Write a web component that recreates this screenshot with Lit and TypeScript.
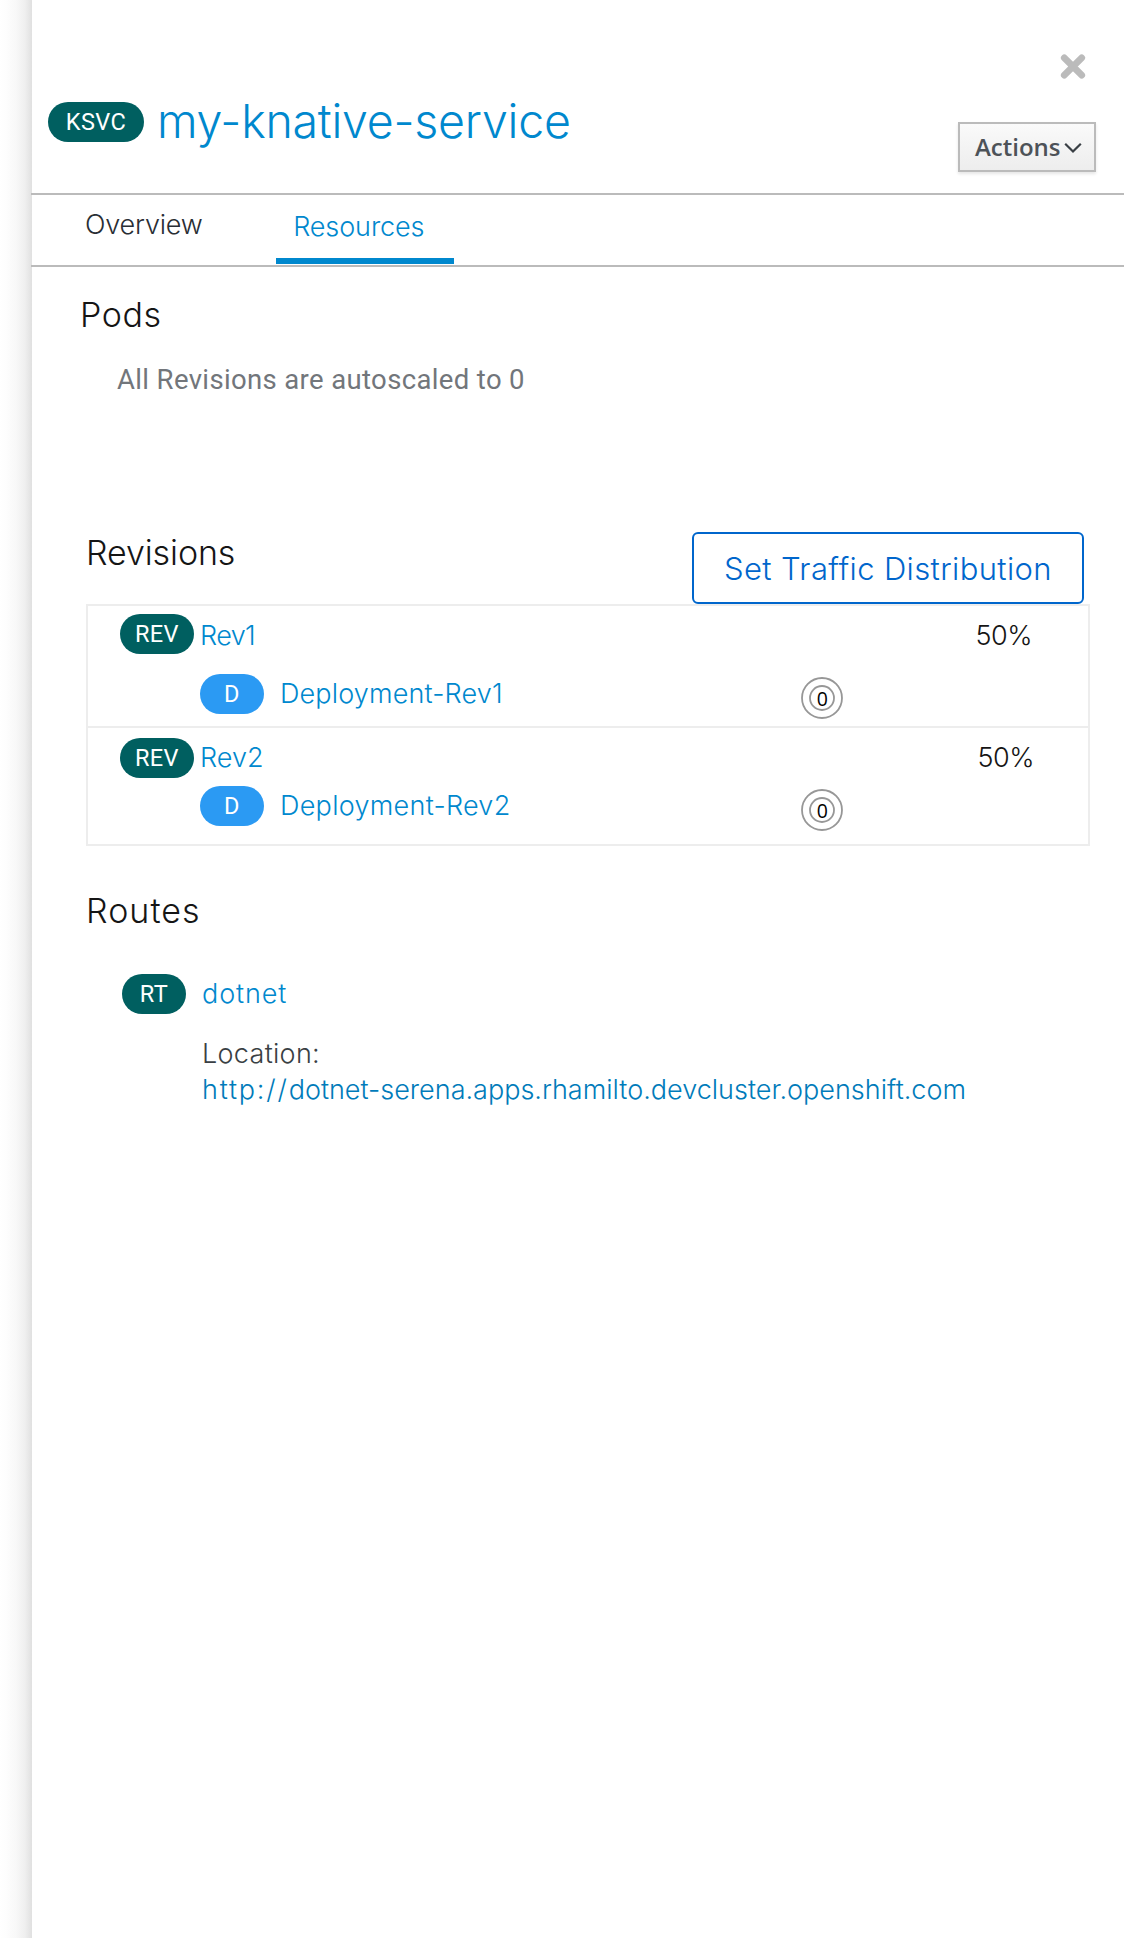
import { LitElement, html, css, svg } from "lit";
import { customElement, property } from "lit/decorators.js";

interface Revision {
  name: string;
  deployment: string;
  pods: number;
  traffic: string;
}

const REVISIONS: Revision[] = [
  { name: "Rev1", deployment: "Deployment-Rev1", pods: 0, traffic: "50%" },
  { name: "Rev2", deployment: "Deployment-Rev2", pods: 0, traffic: "50%" },
];

/** Rounded badge with the short name of a resource kind. */
@customElement("kind-badge")
class KindBadge extends LitElement {
  @property() label = "";

  static styles = css`
    :host {
      display: block;
      flex: none;
      box-sizing: border-box;
      height: 40px;
      border-radius: 20px;
      background: #005f60;
      color: #fff;
      font: 400 23.5px/40px Roboto, "Liberation Sans", sans-serif;
      letter-spacing: 0.4px;
      text-align: center;
      white-space: nowrap;
    }
  `;

  render() {
    return html`${this.label}`;
  }
}

/** Double ring with the number of pods in its centre. */
@customElement("pod-ring")
class PodRing extends LitElement {
  @property({ type: Number }) count = 0;

  static styles = css`
    :host {
      display: block;
      width: 42px;
      height: 42px;
    }
    .ring {
      display: block;
      fill: none;
      stroke: #979797;
      stroke-width: 1.8;
    }
    .count {
      fill: #000;
      stroke: none;
      font: 400 19.5px "Open Sans", "Noto Sans", sans-serif;
      text-anchor: middle;
    }
  `;

  render() {
    return html`<svg class="ring" width="42" height="42" viewBox="0 0 42 42">
      <circle cx="21" cy="21" r="20"></circle>
      <circle cx="21" cy="21" r="12"></circle>
      ${svg`<text class="count" x="21.3" y="28.6">${this.count}</text>`}
    </svg>`;
  }
}

@customElement("app-root")
class AppRoot extends LitElement {
  static styles = css`
    :host {
      display: flex;
      height: 1938px;
      background: #fff;
      color: #151515;
      font: 300 27px/36px Inter, "Liberation Sans", sans-serif;
      white-space: nowrap;
    }
    * {
      box-sizing: border-box;
    }
    a {
      color: #0088ce;
      text-decoration: none;
    }
    h1,
    h2,
    p {
      margin: 0;
      font-weight: 300;
    }
    button {
      font: inherit;
      margin: 0;
      padding: 0;
    }
    .gutter {
      flex: none;
      width: 32px;
      background: linear-gradient(to right, #fff 0, #fdfdfd 20%, #f8f8f8 50%, #efefef 78%, #e0e0e0 100%);
    }
    .panel {
      flex: 1;
      min-width: 0;
      display: flex;
      flex-direction: column;
    }
    .header {
      display: flex;
      justify-content: space-between;
      height: 195px;
      margin-left: -1px;
      padding: 0 28px 0 17px;
      border-bottom: 2px solid #bbb;
    }
    .title {
      display: flex;
      padding-top: 93px;
    }
    .title h1 {
      margin-left: 13px;
      font-size: 46.5px;
      line-height: 56px;
      letter-spacing: -0.25px;
    }
    .ksvc {
      width: 96px;
      margin-top: 9px;
    }
    .tools {
      display: flex;
      flex-direction: column;
      align-items: flex-end;
      padding-top: 54px;
    }
    .close {
      height: 26px;
      margin-right: 10px;
      border: 0;
      background: none;
    }
    .close svg,
    .actions svg {
      display: block;
      fill: none;
    }
    .actions {
      display: flex;
      align-items: center;
      width: 138px;
      height: 50px;
      margin-top: 42px;
      padding-left: 15px;
      border: 2px solid #bbb;
      background: linear-gradient(#fafafa, #ededed);
      box-shadow: 0 2px 3px rgba(3, 3, 3, 0.1);
      color: #4d5258;
      font: 600 24px/46px "Open Sans", sans-serif;
      letter-spacing: 0;
    }
    .actions svg {
      margin: 1px 0 0 3px;
    }
    .tabs {
      display: flex;
      height: 72px;
      margin-left: -1px;
      padding-left: 54px;
      border-bottom: 2px solid #bbb;
    }
    .tab {
      height: 69px;
      padding-top: 12px;
      color: #292e34;
      letter-spacing: -0.2px;
    }
    .tab.active {
      width: 178px;
      margin-left: 73px;
      padding: 14px 0 0 17.5px;
      border-bottom: 6px solid #0088ce;
      color: #0088ce;
      letter-spacing: -0.1px;
    }
    .body {
      padding: 28px 34px 0 54px;
    }
    h2 {
      font-size: 34px;
      line-height: 40px;
    }
    .pods h2 {
      margin-left: -6px;
      letter-spacing: 0.6px;
    }
    .empty {
      margin: 27px 0 0 31px;
      color: #72767b;
      font: 400 27.5px/36px Roboto, "Liberation Sans", sans-serif;
      letter-spacing: 0.36px;
    }
    .bar {
      display: flex;
      justify-content: space-between;
      margin-top: 134px;
      padding-right: 6px;
    }
    .bar h2 {
      margin-top: 1px;
      letter-spacing: -0.1px;
    }
    .traffic-button {
      width: 392px;
      height: 72px;
      padding-top: 1px;
      border: 2px solid #06c;
      border-radius: 6px;
      background: #fff;
      color: #06c;
      font-size: 31px;
      line-height: 67px;
      letter-spacing: 0.38px;
    }
    .list {
      border: 2px solid #ededed;
    }
    .revision {
      height: 120px;
      padding-top: 8px;
    }
    .revision + .revision {
      padding-top: 10px;
      border-top: 2px solid #ededed;
    }
    .revision:last-child {
      height: 118px;
    }
    .line {
      display: flex;
      height: 40px;
      padding-left: 32px;
    }
    .line .rev {
      width: 74px;
    }
    .line .name {
      margin: 4px 0 0 6px;
      letter-spacing: -0.6px;
    }
    .line .share {
      width: 112.5px;
      margin: 4px 0 0 auto;
      letter-spacing: -0.5px;
    }
    .line.sub {
      margin-top: 20px;
      padding: 0 245px 0 112px;
    }
    .line .dep {
      width: 64px;
      background: #2b9af3;
    }
    .line .deployment {
      margin: 2px 0 0 16px;
      letter-spacing: 0.15px;
    }
    .line pod-ring {
      margin: 3px 0 0 auto;
    }
    .revision + .revision .name,
    .revision + .revision .share {
      margin-top: 2px;
    }
    .revision + .revision .name {
      letter-spacing: 0;
    }
    .revision + .revision .share {
      width: 110.5px;
    }
    .revision + .revision .sub {
      margin-top: 8px;
    }
    .revision + .revision .deployment {
      letter-spacing: 0.27px;
    }
    .routes {
      margin-top: 45px;
    }
    .routes h2 {
      letter-spacing: 1.05px;
    }
    .route {
      display: flex;
      margin-top: 43px;
      padding-left: 36px;
    }
    .rt {
      width: 64px;
    }
    .route-info {
      display: flex;
      flex-direction: column;
      margin: 2px 0 0 16px;
    }
    .route-name {
      letter-spacing: 0.9px;
    }
    .location {
      margin-top: 24px;
      color: #393f44;
      letter-spacing: 0.3px;
    }
    .location a {
      display: block;
      color: #007bba;
      letter-spacing: 0;
    }
    .scheme {
      letter-spacing: 1.8px;
    }
  `;

  private renderRevision(r: Revision) {
    return html`<div class="revision">
      <div class="line">
        <kind-badge class="rev" label="REV"></kind-badge>
        <a class="name">${r.name}</a>
        <span class="share">${r.traffic}</span>
      </div>
      <div class="line sub">
        <kind-badge class="dep" label="D"></kind-badge>
        <a class="deployment">${r.deployment}</a>
        <pod-ring .count=${r.pods}></pod-ring>
      </div>
    </div>`;
  }

  render() {
    return html`
      <div class="gutter"></div>
      <main class="panel">
        <header class="header">
          <div class="title">
            <kind-badge class="ksvc" label="KSVC"></kind-badge>
            <h1><a>my-knative-service</a></h1>
          </div>
          <div class="tools">
            <button class="close">
              <svg width="26" height="26" viewBox="0 0 26 26" stroke="#bbb" stroke-width="6.8" stroke-linecap="round">
                <path d="M4.3 3.8 21.7 21.2M21.7 3.8 4.3 21.2"></path>
              </svg>
            </button>
            <button class="actions">
              Actions<svg width="18" height="12" viewBox="0 0 18 12" stroke="#393f44" stroke-width="2.2">
                <path d="M1.2 1.7 9 9.5 16.8 1.7"></path>
              </svg>
            </button>
          </div>
        </header>
        <nav class="tabs">
          <div class="tab">Overview</div>
          <div class="tab active">Resources</div>
        </nav>
        <div class="body">
          <section class="pods">
            <h2>Pods</h2>
            <p class="empty">All Revisions are autoscaled to 0</p>
          </section>
          <section>
            <div class="bar">
              <h2>Revisions</h2>
              <button class="traffic-button">Set Traffic Distribution</button>
            </div>
            <div class="list">${REVISIONS.map((r) => this.renderRevision(r))}</div>
          </section>
          <section class="routes">
            <h2>Routes</h2>
            <div class="route">
              <kind-badge class="rt" label="RT"></kind-badge>
              <div class="route-info">
                <a class="route-name">dotnet</a>
                <div class="location">
                  Location:
                  <a><span class="scheme">http://</span>dotnet-serena.apps.rhamilto.devcluster.openshift.com</a>
                </div>
              </div>
            </div>
          </section>
        </div>
      </main>
    `;
  }
}
